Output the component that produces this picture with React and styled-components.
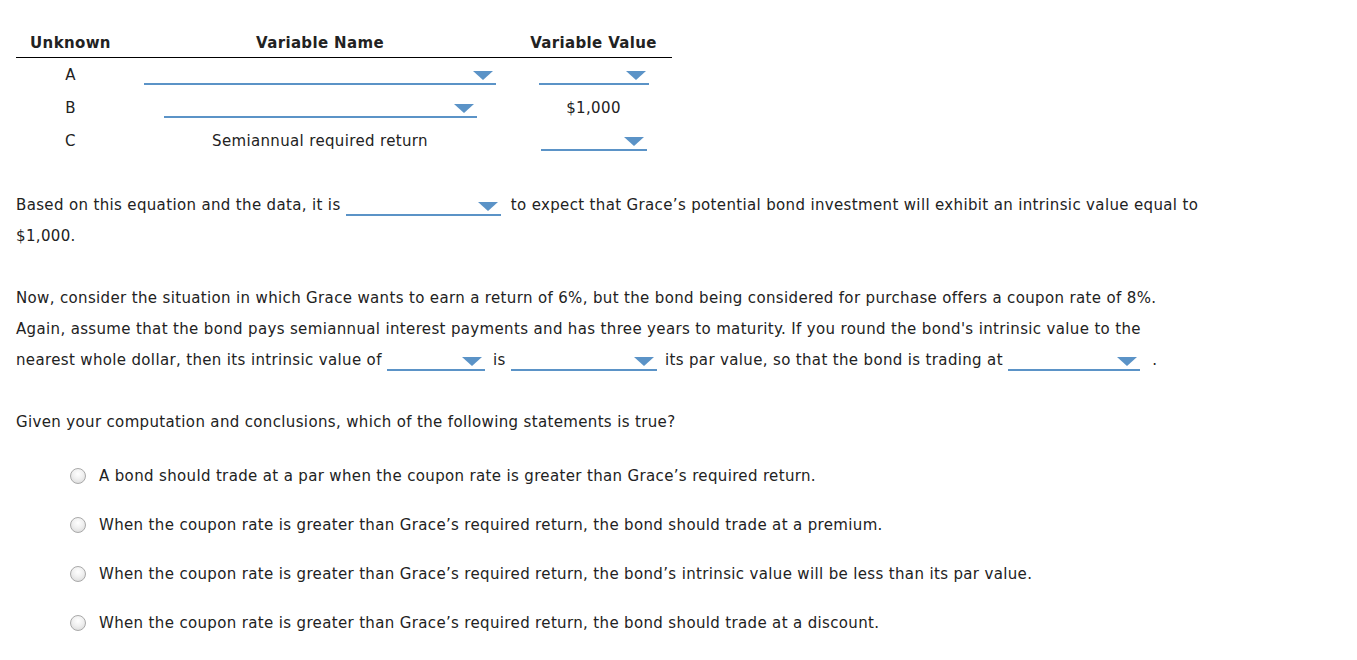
import React from 'react';
import styled, { createGlobalStyle } from 'styled-components';

const GlobalStyle = createGlobalStyle`
  body {
    margin: 0;
    background: #ffffff;
    font-family: "DejaVu Sans", Verdana, sans-serif;
    font-size: 15px;
    letter-spacing: 0.35px;
    color: #222222;
  }
`;

const Page = styled.div`
  padding: 27px 16px 0 16px;
`;

const Table = styled.table`
  width: 656px;
  border-collapse: collapse;
`;

const Th = styled.th`
  width: ${(props) => props.width}px;
  padding: 6px 0 4px;
  line-height: 20px;
  font-weight: bold;
  text-align: center;
  border-bottom: 1px solid #000;
`;

const Td = styled.td`
  height: 33px;
  padding: 0;
  text-align: center;
  vertical-align: middle;
`;

const Dropdown = styled.span`
  display: inline-block;
  width: ${(props) => props.width}px;
  height: 16px;
  border-bottom: 2px solid #5b93c7;
  vertical-align: -6px;
  margin: ${(props) => props.margin || '0'};
`;

const Caret = styled.span`
  float: right;
  margin: 4px 3px 0 0;
  width: 0;
  height: 0;
  border-left: 10px solid transparent;
  border-right: 10px solid transparent;
  border-top: 9px solid #5b93c7;
`;

const Paragraph = styled.p`
  margin: ${(props) => props.top}px 0 0;
  line-height: 31px;
  white-space: nowrap;
`;

const Options = styled.div`
  margin-top: 13px;
  padding-left: 54px;
  display: flex;
  flex-direction: column;
`;

const Option = styled.label`
  display: flex;
  align-items: center;
  height: 49px;
  gap: 13px;
`;

const Radio = styled.span`
  width: 14px;
  height: 14px;
  border-radius: 50%;
  border: 1px solid #a9a9a9;
  background: radial-gradient(circle at 50% 35%, #ffffff 0%, #f0f0f0 45%, #d6d6d6 100%);
  flex-shrink: 0;
`;

function Select({ width, margin }) {
  return (
    <Dropdown width={width} margin={margin}>
      <Caret />
    </Dropdown>
  );
}

const rows = [
  { unknown: 'A', name: <Select width={352} />, value: <Select width={110} /> },
  { unknown: 'B', name: <Select width={313} />, value: '$1,000' },
  { unknown: 'C', name: 'Semiannual required return', value: <Select width={106} /> },
];

const statements = [
  'A bond should trade at a par when the coupon rate is greater than Grace’s required return.',
  'When the coupon rate is greater than Grace’s required return, the bond should trade at a premium.',
  'When the coupon rate is greater than Grace’s required return, the bond’s intrinsic value will be less than its par value.',
  'When the coupon rate is greater than Grace’s required return, the bond should trade at a discount.',
];

export default function App() {
  return (
    <Page>
      <GlobalStyle />
      <Table>
        <thead>
          <tr>
            <Th width={109}>Unknown</Th>
            <Th width={390}>Variable Name</Th>
            <Th width={157}>Variable Value</Th>
          </tr>
        </thead>
        <tbody>
          {rows.map((row) => (
            <tr key={row.unknown}>
              <Td>{row.unknown}</Td>
              <Td>{row.name}</Td>
              <Td>{row.value}</Td>
            </tr>
          ))}
        </tbody>
      </Table>

      <Paragraph top={33}>
        Based on this equation and the data, it is <Select width={155} margin="0 5px 0 0" /> to expect that Grace’s potential bond investment will exhibit an intrinsic value equal to
        <br />
        $1,000.
      </Paragraph>

      <Paragraph top={31}>
        Now, consider the situation in which Grace wants to earn a return of 6%, but the bond being considered for purchase offers a coupon rate of 8%.
        <br />
        Again, assume that the bond pays semiannual interest payments and has three years to maturity. If you round the bond's intrinsic value to the
        <br />
        nearest whole dollar, then its intrinsic value of <Select width={98} margin="0 3px 0 0" /> is <Select width={146} margin="0 3px 0 0" /> its par value, so that the bond is trading at <Select width={132} margin="0 7px 0 0" /> .
      </Paragraph>

      <Paragraph top={31}>
        Given your computation and conclusions, which of the following statements is true?
      </Paragraph>

      <Options>
        {statements.map((text) => (
          <Option key={text}>
            <Radio />
            {text}
          </Option>
        ))}
      </Options>
    </Page>
  );
}
